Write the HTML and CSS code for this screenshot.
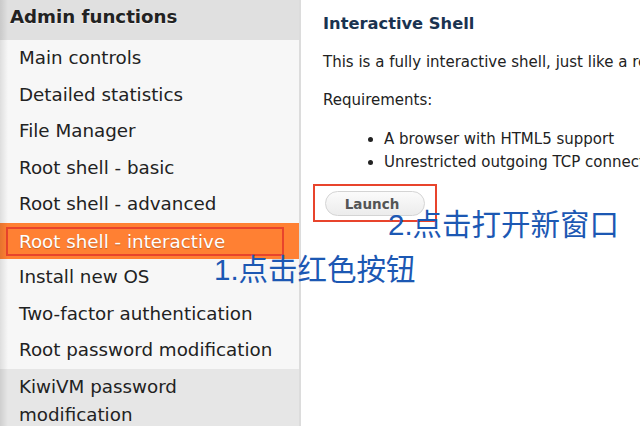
FILE: index.html
```html
<!DOCTYPE html>
<html>
<head>
<meta charset="utf-8">
<link rel="stylesheet" href="styles.css">
</head>
<body>
<div class="page">
  <aside class="sidebar">
    <div class="side-head">Admin functions</div>
    <ul class="menu">
      <li class="item">Main controls</li>
      <li class="item">Detailed statistics</li>
      <li class="item">File Manager</li>
      <li class="item">Root shell - basic</li>
      <li class="item">Root shell - advanced</li>
      <li class="item active"><span class="mark">Root shell - interactive</span></li>
      <li class="item">Install new OS</li>
      <li class="item">Two-factor authentication</li>
      <li class="item">Root password modification</li>
      <li class="item hover">KiwiVM password modification</li>
    </ul>
  </aside>
  <main class="content">
    <h2 class="title">Interactive Shell</h2>
    <p class="text">This is a fully interactive shell, just like a real SSH session.</p>
    <p class="text">Requirements:</p>
    <ul class="reqs">
      <li>A browser with HTML5 support</li>
      <li>Unrestricted outgoing TCP connections</li>
    </ul>
    <div class="launch-box"><button class="launch">Launch</button></div>
  </main>
  <div class="note note1">1.点击红色按钮</div>
  <div class="note note2">2.点击打开新窗口</div>
</div>
</body>
</html>
```

FILE: styles.css
```css
* { box-sizing: border-box; }
html, body { margin: 0; padding: 0; background: #fff; overflow: hidden; }
.page {
  position: relative;
  width: 640px;
  height: 426px;
  display: flex;
  font-family: "DejaVu Sans", Verdana, sans-serif;
}
.sidebar {
  width: 301px;
  flex: none;
  background: #e6e6e6;
  border-right: 2px solid #dcdcdc;
  position: relative;
}
.sidebar::before {
  content: "";
  position: absolute;
  left: 0; top: 0; bottom: 0;
  width: 8px;
  background: linear-gradient(to right, rgba(0,0,0,0.10), rgba(0,0,0,0));
  z-index: 2;
}
.side-head {
  height: 40px;
  background: #e0e0e0;
  font-weight: bold;
  font-size: 18.2px;
  line-height: 22px;
  color: #222;
  padding: 6px 0 0 10px;
  text-shadow: 0 1px 1px rgba(255,255,255,0.6);
}
.menu { list-style: none; margin: 0; padding: 0; }
.item {
  height: 36.5px;
  line-height: 28.5px;
  padding: 4px 0 4px 19px;
  font-size: 18.3px;
  color: #222;
  background: #f7f7f7;
  white-space: nowrap;
}
.item.active {
  background: #ff8033;
  color: #fff;
  padding: 4.5px 15px 0 6px;
  text-shadow: 0 1px 1px rgba(0,0,0,0.25);
}
.mark {
  display: block;
  height: 29px;
  line-height: 25px;
  border: 2px solid #e8442c;
  padding-left: 11px;
}
.item.hover {
  background: #e6e6e6;
  height: auto;
  white-space: normal;
  padding-right: 60px;
}
.content {
  flex: 1;
  padding: 14px 0 0 22px;
  white-space: nowrap;
  overflow: hidden;
  font-size: 15px;
  color: #222;
}
.title {
  margin: 0;
  font-size: 16.3px;
  font-weight: bold;
  color: #1a3350;
  line-height: 20px;
}
.text { margin: 18px 0 0; line-height: 20px; }
.reqs { margin: 18px 0 0; padding-left: 61px; line-height: 23px; }
.launch-box {
  margin: 10px 0 0 -10px;
  width: 124px;
  height: 38px;
  border: 2px solid #e8442c;
  padding: 5px 0 0 10px;
}
.launch {
  display: block;
  width: 100px;
  height: 25px;
  border: 1px solid #d4d4d4;
  border-radius: 13px;
  background: linear-gradient(#fbfbfb, #ececec);
  font-family: "DejaVu Sans", Verdana, sans-serif;
  font-weight: bold;
  font-size: 13.5px;
  color: #555;
  padding: 0 6px 0 0;
}
.note {
  position: absolute;
  font-family: "Liberation Sans", "Noto Sans CJK SC", sans-serif;
  font-size: 29.5px;
  color: #1c58b3;
  white-space: nowrap;
  line-height: 34px;
  z-index: 3;
}
.note1 { left: 214px; top: 253px; }
.note2 { left: 388px; top: 208px; }
```
